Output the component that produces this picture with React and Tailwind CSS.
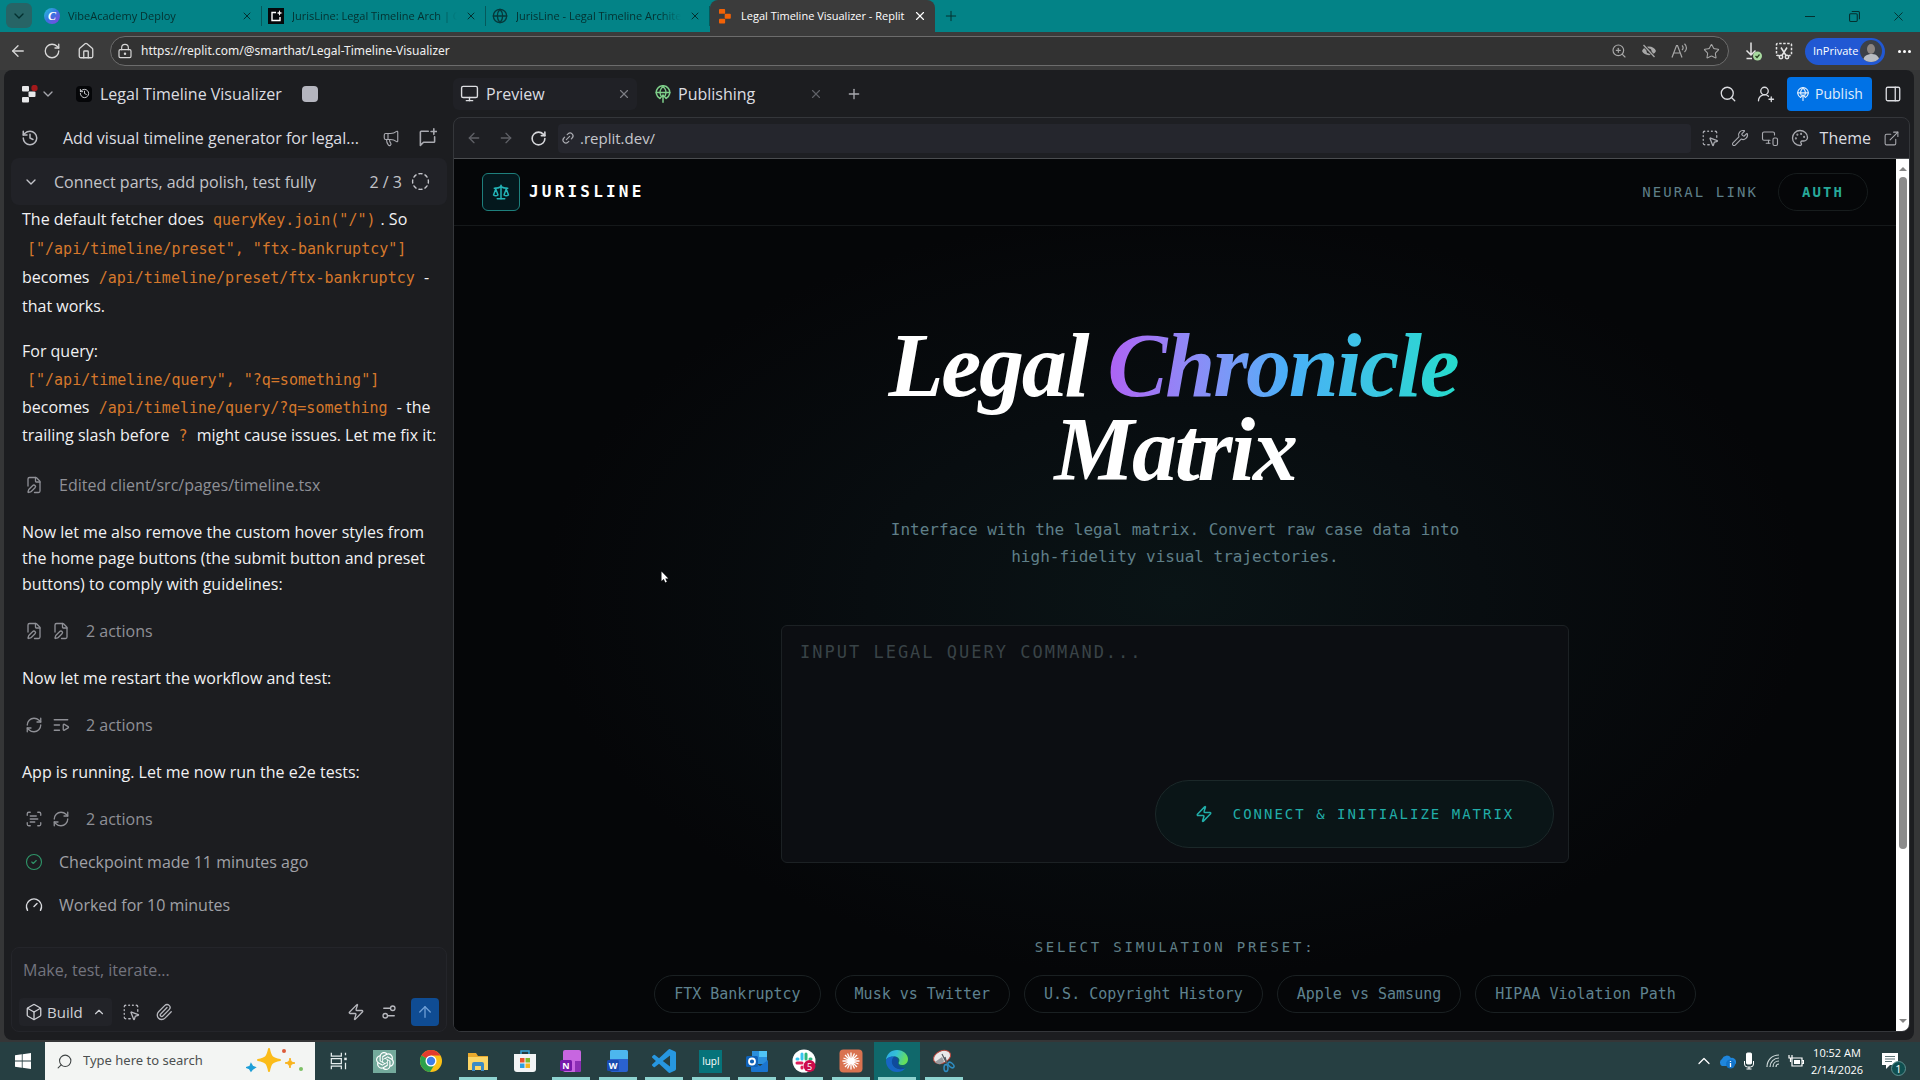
import {
  ArrowLeft, ArrowRight, ArrowUp, Box, ChevronDown, ChevronUp, CircleCheck, CircleDashed,
  ExternalLink, FilePen, Gauge, Globe, History, House, Link2, ListVideo, LockKeyhole, Megaphone,
  Monitor, MonitorSmartphone, Palette, PanelRight, Paperclip, Plus, RefreshCw, RotateCw, Scale,
  ScanText, Search, Settings2, SquareDashedMousePointer, Star, UserRoundPlus, Wrench, X, Zap, ZoomIn,
} from "lucide-react";
import { SiOpenai } from "react-icons/si";

const browserTabs = [
  { title: "VibeAcademy Deploy", icon: "canva" },
  { title: "JurisLine: Legal Timeline Arch | Go", icon: "studio" },
  { title: "JurisLine - Legal Timeline Architec", icon: "globe" },
];

const presets = [
  "FTX Bankruptcy",
  "Musk vs Twitter",
  "U.S. Copyright History",
  "Apple vs Samsung",
  "HIPAA Violation Path",
];

function ReplitMark({ className, dot }) {
  return (
    <svg viewBox="0 0 16 18" className={className} fill="currentColor" aria-hidden="true">
      <rect x="0" y="1" width="7" height="5.5" rx="1" />
      <rect x="6.5" y="6.5" width="7" height="5.5" rx="1" />
      <rect x="0" y="12" width="7" height="5.5" rx="1" />
      {dot && <circle cx="12.5" cy="3" r="3.2" fill="#a3191b" />}
    </svg>
  );
}

function PublishIcon({ className }) {
  return (
    <svg viewBox="0 0 24 24" className={className} fill="none" stroke="currentColor" strokeWidth="2" strokeLinecap="round" strokeLinejoin="round" aria-hidden="true">
      <path d="M8 18a9 9 0 1 1 8 0" />
      <path d="M9 14c-2-4-.5-9 3-12 3.500 3 5 8 3 12" />
      <path d="M3 10h18" />
      <path d="M12 23v-9M8.500 17l3.500-3.500 3.500 3.500" />
    </svg>
  );
}

function NewChatIcon({ className }) {
  return (
    <svg viewBox="0 0 24 24" className={className} fill="none" stroke="currentColor" strokeWidth="2" strokeLinecap="round" strokeLinejoin="round" aria-hidden="true">
      <path d="M13 4H4a1 1 0 0 0-1 1v17l4-4h13a1 1 0 0 0 1-1v-6" />
      <path d="M20 1v7M16.500 4.500h7" />
    </svg>
  );
}

function TabIcon({ icon }) {
  if (icon === "canva") {
    return (
      <span className="flex size-4 shrink-0 items-center justify-center rounded-full bg-gradient-to-br from-[#21c4d6] via-[#3a6fe0] to-[#7d3be0] font-['Liberation_Serif',serif] text-xs font-bold italic text-white">
        C
      </span>
    );
  }
  if (icon === "studio") {
    return (
      <svg viewBox="0 0 16 16" className="size-4 shrink-0" aria-hidden="true">
        <rect width="16" height="16" fill="#05080a" />
        <path d="M8 4.500H4v8h8V9" fill="none" stroke="#fff" strokeWidth="1.400" />
        <path d="M11.500 2l.8 2.200 2.200.8-2.200.8-.8 2.200-.8-2.200-2.200-.8 2.200-.8z" fill="#fff" />
      </svg>
    );
  }
  return <Globe className="size-4 shrink-0 text-[#06383a]" />;
}

function TabStrip() {
  return (
    <div className="flex h-8 items-stretch bg-[#038387] pl-[6px] text-[#04302f]">
      <button aria-label="Tab actions" className="mt-[3px] flex h-[25px] w-[26px] items-center justify-center rounded-md bg-[#276466]">
        <ChevronDown className="size-4" />
      </button>
      <div className="ml-[6px] flex text-[11px]">
        {browserTabs.map((tab) => (
          <div key={tab.title} className="flex h-8 w-56 items-center gap-2 pr-2 pl-[6px]">
            <TabIcon icon={tab.icon} />
            <span className="min-w-0 flex-1 whitespace-nowrap [mask-image:linear-gradient(to_right,black_88%,transparent)]">
              {tab.title}
            </span>
            <button aria-label={`Close ${tab.title}`}><X className="size-3" /></button>
            <span className="-mr-2 h-5 w-px bg-[#05595b]" />
          </div>
        ))}
        <div className="flex h-8 w-[225px] items-center gap-2 rounded-t-lg bg-[#3b3b3b] pr-2 pl-[9px] text-white">
          <ReplitMark className="h-4 w-[14px] shrink-0 text-[#f26207]" />
          <span className="flex-1 whitespace-nowrap">Legal Timeline Visualizer - Replit</span>
          <button aria-label="Close tab"><X className="size-[14px]" /></button>
        </div>
      </div>
      <button aria-label="New tab" className="ml-2"><Plus className="size-4" strokeWidth={1.5} /></button>
      <div className="ml-auto flex">
        <button aria-label="Minimize" className="flex w-11 items-center justify-center">
          <span className="h-px w-[10px] bg-[#04302f]" />
        </button>
        <button aria-label="Restore" className="flex w-11 items-center justify-center">
          <svg viewBox="0 0 10 10" className="size-[11px]" fill="none" stroke="currentColor" aria-hidden="true">
            <rect x=".5" y="2.500" width="7" height="7" rx="1" />
            <path d="M2.500.5h6a1 1 0 0 1 1 1v6" />
          </svg>
        </button>
        <button aria-label="Close window" className="flex w-11 items-center justify-center">
          <X className="size-[15px]" strokeWidth={1.5} />
        </button>
      </div>
    </div>
  );
}

function AddressBar() {
  return (
    <div className="flex h-[38px] items-center bg-[#3b3b3b] px-[9px] text-[#d8d8d8]">
      <div className="flex w-[101px] items-center gap-4">
        <button aria-label="Back"><ArrowLeft className="size-[18px]" strokeWidth={1.75} /></button>
        <button aria-label="Refresh"><RotateCw className="size-[18px]" strokeWidth={1.75} /></button>
        <button aria-label="Home"><House className="size-[18px]" strokeWidth={1.75} /></button>
      </div>
      <div className="flex h-[30px] flex-1 items-center rounded-full border border-[#6c6c6c] bg-[#323232] pr-2 pl-[6px]">
        <LockKeyhole className="size-4" strokeWidth={1.75} />
        <input
          aria-label="Address"
          defaultValue="https://replit.com/@smarthat/Legal-Timeline-Visualizer"
          className="ml-2 flex-1 bg-transparent font-['Noto_Sans',sans-serif] text-xs text-[#f0f0f0] outline-none"
        />
        <div className="flex items-center gap-[14px] text-[#a8a8a8]">
          <ZoomIn className="size-4" strokeWidth={1.75} />
          <svg viewBox="0 0 16 16" className="size-4" aria-hidden="true">
            <path d="M1 8c2-6 12-6 14 0-2 5.500-12 5.500-14 0z" fill="currentColor" />
            <circle cx="8" cy="8" r="2.500" fill="#323232" />
            <path d="M2 1.500l12 13" stroke="#323232" strokeWidth="3" />
            <path d="M2.500 2l11 12" stroke="currentColor" strokeWidth="1.300" />
          </svg>
          <svg viewBox="0 0 18 16" className="h-4 w-[18px]" fill="none" stroke="currentColor" strokeWidth="1.200" aria-hidden="true">
            <path d="M1 14.500L5.500 2.500h1L11 14.500M2.800 10h6.400M11 2.500c1.500 1.200 1.500 3 0 4.500M13.500.8c2.600 2.400 2.600 6 0 8.200" />
          </svg>
          <Star className="size-[17px]" strokeWidth={1.5} />
        </div>
      </div>
      <div className="flex items-center pl-[14px]">
        <button aria-label="Downloads">
          <svg viewBox="0 0 20 20" className="size-5" fill="none" stroke="#e4e4e4" strokeWidth="1.500" aria-hidden="true">
            <path d="M8 1.500v12M3.500 9.500L8 14l4.500-4.500M3.500 17.500H9" />
            <circle cx="14.500" cy="15" r="4.500" fill="#a8dba0" stroke="none" />
            <path d="M12.500 15l1.500 1.500 2.500-3" stroke="#24421f" strokeWidth="1.200" />
          </svg>
        </button>
        <button aria-label="Screenshot" className="ml-3">
          <svg viewBox="0 0 18 18" className="size-[18px]" fill="none" stroke="#e4e4e4" strokeWidth="1.500" aria-hidden="true">
            <path d="M4 13.500H2.500a1 1 0 0 1-1-1v-10a1 1 0 0 1 1-1h13a1 1 0 0 1 1 1v10a1 1 0 0 1-1 1H14" strokeDasharray="2.500 1.500" />
            <path d="M6 5.500l5 8M12 5.500l-5 8" />
            <circle cx="6" cy="15" r="1.700" />
            <circle cx="12" cy="15" r="1.700" />
          </svg>
        </button>
        <button className="ml-3 flex h-[27px] w-20 items-center justify-between rounded-full bg-[#2158d3] pr-[3px] pl-2 text-[11px] text-white">
          InPrivate
          <svg viewBox="0 0 22 22" className="size-[22px] rounded-full" aria-hidden="true">
            <rect width="22" height="22" fill="#3c4048" />
            <path d="M3 22c0-6 4-8 9-8s7 3 8 8z" fill="#b9bcc2" />
            <ellipse cx="11" cy="9" rx="4" ry="5" fill="#8c8582" />
          </svg>
        </button>
        <button aria-label="Settings and more" className="ml-[13px] flex gap-[2px]">
          <span className="size-[3px] rounded-full bg-white" />
          <span className="size-[3px] rounded-full bg-white" />
          <span className="size-[3px] rounded-full bg-white" />
        </button>
      </div>
    </div>
  );
}

function Code({ children }) {
  return (
    <code className="px-[5px] font-['DejaVu_Sans_Mono',monospace] text-[15px] leading-none text-[#d5782c]">
      {children}
    </code>
  );
}

function ActionRow({ icons, children }) {
  return (
    <div className="flex h-6 items-center text-[#8f9096]">
      <div className="flex gap-[9px] pl-[3px]">
        {icons.map((Icon, i) => (
          <Icon key={i} className="size-[18px]" strokeWidth={1.75} />
        ))}
      </div>
      <span className="ml-4">{children}</span>
    </div>
  );
}

function AgentPanel() {
  return (
    <section className="flex w-[449px] shrink-0 flex-col pr-[6px] pl-[7px] text-base">
      <div className="flex h-[47px] shrink-0 items-center pl-[11px] text-[#dcdde1]">
        <ReplitMark className="h-[18px] w-4 text-[#e8e8ea]" dot />
        <ChevronDown className="ml-[2px] size-4 text-[#a6a7ad]" />
        <span className="ml-5 flex size-4 items-center justify-center rounded bg-[#050608]">
          <History className="size-[11px]" />
        </span>
        <h2 className="ml-2">Legal Timeline Visualizer</h2>
        <span className="ml-5 size-4 rounded-sm bg-[#b5b6bf]" />
      </div>

      <div className="flex h-[41px] shrink-0 items-center px-[10px] text-[#dcdde1]">
        <button aria-label="History"><History className="size-[18px] text-[#b9bac0]" /></button>
        <h3 className="ml-6">Add visual timeline generator for legal...</h3>
        <button aria-label="Announcements" className="ml-auto"><Megaphone className="size-[18px] text-[#a9aab0]" strokeWidth={1.5} /></button>
        <button aria-label="New chat" className="ml-[18px]"><NewChatIcon className="size-[19px] text-[#a9aab0]" /></button>
      </div>

      <div className="flex h-[47px] shrink-0 items-center rounded-lg bg-[#212227] pr-[17px] pl-3 text-[#c3c4c9]">
        <ChevronDown className="size-4" />
        <span className="ml-[15px]">Connect parts, add polish, test fully</span>
        <span className="ml-auto">2 / 3</span>
        <CircleDashed className="ml-[9px] size-[19px]" strokeWidth={1.75} />
      </div>

      <div className="flex-1 overflow-hidden px-[11px] text-[#f1f1f3]">
        <p className="-mr-3 leading-[29px]">
          The default fetcher does <Code>queryKey.join("/")</Code>. So
          <br />
          <Code>["/api/timeline/preset", "ftx-bankruptcy"]</Code>
          <br />
          becomes <Code>/api/timeline/preset/ftx-bankruptcy</Code> -
          <br />
          that works.
        </p>
        <p className="-mr-3 mt-4 leading-7">
          For query:
          <br />
          <Code>["/api/timeline/query", "?q=something"]</Code>
          <br />
          becomes <Code>/api/timeline/query/?q=something</Code> - the
          <br />
          trailing slash before <Code>?</Code> might cause issues. Let me fix it:
        </p>
        <div className="mt-6 flex flex-col gap-[22px] leading-[26px]">
          <ActionRow icons={[FilePen]}>Edited client/src/pages/timeline.tsx</ActionRow>
          <p className="-mr-3">
            Now let me also remove the custom hover styles from
            <br />
            the home page buttons (the submit button and preset
            <br />
            buttons) to comply with guidelines:
          </p>
          <ActionRow icons={[FilePen, FilePen]}>2 actions</ActionRow>
          <p>Now let me restart the workflow and test:</p>
          <ActionRow icons={[RefreshCw, ListVideo]}>2 actions</ActionRow>
          <p>App is running. Let me now run the e2e tests:</p>
          <div className="flex flex-col gap-[19px]">
            <ActionRow icons={[ScanText, RefreshCw]}>2 actions</ActionRow>
            <div className="flex h-6 items-center gap-4 pl-[3px] text-[#a0a1a7]">
              <CircleCheck className="size-[18px] text-[#2f9468]" strokeWidth={1.5} />
              Checkpoint made 11 minutes ago
            </div>
            <div className="flex h-6 items-center gap-4 pl-[3px] text-[#a0a1a7]">
              <Gauge className="size-[18px] text-[#d9dade]" />
              Worked for 10 minutes
            </div>
          </div>
        </div>
      </div>

      <form className="mb-2 flex shrink-0 flex-col rounded-lg border border-[#24252a] bg-[#1d1e22] pt-2 pr-[7px] pb-[5px] pl-[7px]">
        <input
          aria-label="Message"
          placeholder="Make, test, iterate..."
          className="h-7 bg-transparent px-1 outline-none placeholder:text-[#73747e]"
        />
        <div className="mt-[14px] flex h-7 items-center text-[#b7b8be]">
          <button type="button" className="flex h-7 w-[93px] items-center rounded bg-[#222328] px-[6px] text-[#cfd0d5]">
            <Box className="size-[18px]" strokeWidth={1.75} />
            <span className="ml-1 text-[15px]">Build</span>
            <ChevronUp className="ml-auto size-[14px]" />
          </button>
          <button type="button" aria-label="Select element" className="ml-[10px]"><SquareDashedMousePointer className="size-[18px]" strokeWidth={1.75} /></button>
          <button type="button" aria-label="Attach" className="ml-[15px]"><Paperclip className="size-[18px]" strokeWidth={1.75} /></button>
          <button type="button" aria-label="Fast mode" className="ml-auto"><Zap className="size-[18px]" strokeWidth={1.75} /></button>
          <button type="button" aria-label="Options" className="ml-[15px]"><Settings2 className="size-[18px] -scale-y-100" strokeWidth={1.75} /></button>
          <button type="button" aria-label="Send" className="ml-[13px] flex size-7 items-center justify-center rounded bg-[#0f4c93] text-[#6f9fd6]">
            <ArrowUp className="size-[18px]" strokeWidth={1.75} />
          </button>
        </div>
      </form>
    </section>
  );
}

function WorkspaceTabs() {
  return (
    <div className="flex h-[47px] shrink-0 items-center text-base text-[#dcdde1]">
      <div className="flex h-8 w-[184px] items-center rounded-md bg-[#202126] pr-[6px] pl-[7px]">
        <Monitor className="size-[19px]" strokeWidth={1.75} />
        <span className="ml-[7px]">Preview</span>
        <button aria-label="Close Preview" className="ml-auto"><X className="size-[14px] text-[#7d7e84]" /></button>
      </div>
      <div className="flex h-8 w-[192px] items-center pr-[6px] pl-[17px]">
        <PublishIcon className="size-[18px] text-[#7fd08a]" />
        <span className="ml-[6px]">Publishing</span>
        <button aria-label="Close Publishing" className="ml-auto"><X className="size-[14px] text-[#5f6066]" /></button>
      </div>
      <button aria-label="New pane" className="ml-[17px]"><Plus className="size-4 text-[#a9aab0]" /></button>
      <div className="ml-auto flex items-center pr-3">
        <button aria-label="Search"><Search className="size-[18px]" strokeWidth={1.75} /></button>
        <button aria-label="Invite" className="ml-5"><UserRoundPlus className="size-[18px]" strokeWidth={1.75} /></button>
        <button className="ml-3 flex h-[34px] w-[85px] items-center justify-center gap-[5px] rounded bg-[#0072e6] text-sm text-[#e0edfb]">
          <PublishIcon className="size-[14px]" />
          Publish
        </button>
        <button aria-label="Toggle panel" className="ml-3"><PanelRight className="size-[18px]" strokeWidth={1.75} /></button>
      </div>
    </div>
  );
}

function PreviewToolbar() {
  return (
    <div className="flex h-[41px] shrink-0 items-center border-b border-[#4b4d50] pr-[9px] pl-3 text-[#a9aab0]">
      <button aria-label="Back"><ArrowLeft className="size-4 text-[#5f6066]" /></button>
      <button aria-label="Forward" className="ml-4"><ArrowRight className="size-4 text-[#5f6066]" /></button>
      <button aria-label="Reload" className="ml-4"><RotateCw className="size-[17px] text-[#d5d6da]" strokeWidth={2.25} /></button>
      <div className="ml-[11px] flex h-[29px] flex-1 items-center rounded bg-[#25262d] pl-[3px]">
        <Link2 className="size-[14px] -rotate-45" />
        <input aria-label="Preview path" defaultValue=".replit.dev/" className="ml-[5px] flex-1 bg-transparent text-[15px] text-[#c5c6cc] outline-none" />
      </div>
      <div className="flex items-center gap-3 pl-[10px]">
        <SquareDashedMousePointer className="size-[18px]" strokeWidth={1.75} />
        <Wrench className="size-[18px]" strokeWidth={1.5} />
        <MonitorSmartphone className="size-[18px]" strokeWidth={1.5} />
        <Palette className="size-[18px]" strokeWidth={1.75} />
      </div>
      <button className="ml-[11px] text-base text-[#dcdde1]">Theme</button>
      <button aria-label="Open in new tab" className="ml-3"><ExternalLink className="size-[17px]" strokeWidth={1.5} /></button>
    </div>
  );
}

function PreviewPage() {
  return (
    <div className="flex min-w-0 flex-1 flex-col bg-[#050608] bg-[radial-gradient(ellipse_at_center,#0a1416_0%,#080d10_30%,#050608_62%)] font-['DejaVu_Sans_Mono',monospace] text-[#5f7f88]">
      <header className="flex h-[67px] shrink-0 items-center justify-between border-b border-[#15181a] bg-[#050608] px-7">
        <div className="flex items-center gap-[9px]">
          <span className="flex size-[38px] items-center justify-center rounded-md border border-[#1e7f7c] bg-[#04181d] text-[#23b3b6]">
            <Scale className="size-[18px]" />
          </span>
          <span className="text-base font-bold tracking-[0.2em] text-white">JURISLINE</span>
        </div>
        <div className="flex items-center gap-5 text-sm">
          <a href="#neural" className="tracking-[0.15em]">NEURAL LINK</a>
          <button className="h-[38px] w-[90px] rounded-full border border-[#171c1d] font-bold tracking-[0.15em] text-[#27a99a]">
            AUTH
          </button>
        </div>
      </header>

      <main className="flex flex-1 flex-col items-center pt-[98px]">
        <h1 className="text-center font-['Liberation_Serif',serif] text-[90px] leading-[84px] font-bold tracking-tight text-white italic">
          Legal{" "}
          <span className="bg-gradient-to-r from-[#ad62f4] via-[#4aaef8] to-[#24dccb] bg-clip-text pr-1 text-transparent">
            Chronicle
          </span>
          <br />
          Matrix
        </h1>
        <p className="mt-6 text-center text-base leading-[27px]">
          Interface with the legal matrix. Convert raw case data into
          <br />
          high-fidelity visual trajectories.
        </p>
        <form className="mt-[55px] flex h-[238px] w-[788px] flex-col rounded-md border border-[#1c2124] bg-[#0c0e12] p-[14px]">
          <textarea
            aria-label="Legal query"
            placeholder="INPUT LEGAL QUERY COMMAND..."
            className="flex-1 resize-none bg-transparent px-1 text-[17px] leading-6 tracking-[2px] outline-none placeholder:text-[#394347]"
          />
          <button type="button" className="flex h-[68px] w-[399px] items-center justify-center gap-5 self-end rounded-full border border-[#1b2829] bg-[#0a1517] text-sm tracking-[2px] text-[#21ada8]">
            <Zap className="size-[18px]" />
            CONNECT &amp; INITIALIZE MATRIX
          </button>
        </form>
        <h2 className="mt-[74px] text-sm tracking-[0.2em]">SELECT SIMULATION PRESET:</h2>
        <div className="mt-[18px] flex justify-center gap-[14px]">
          {presets.map((name) => (
            <button key={name} className="h-[38px] rounded-full border border-[#1a2022] px-[19px] text-[15px] whitespace-nowrap text-[#5f828f]">
              {name}
            </button>
          ))}
        </div>
      </main>
    </div>
  );
}

function Scrollbar() {
  return (
    <div className="flex w-[13px] shrink-0 flex-col items-center bg-white py-2">
      <span className="border-x-4 border-b-4 border-x-transparent border-b-[#858585]" />
      <span className="mt-[6px] h-[672px] w-[8px] rounded-full bg-[#8b8b8b]" />
      <span className="mt-auto border-x-4 border-t-4 border-x-transparent border-t-[#858585]" />
    </div>
  );
}

function Sparkle() {
  return (
    <svg viewBox="0 0 60 28" className="h-7 w-[60px]" aria-hidden="true">
      <path d="M23 2c1.500 8 3 9.500 11 11-8 1.500-9.500 3-11 11-1.500-8-3-9.500-11-11 8-1.500 9.500-3 11-11z" fill="#fbbc1a" stroke="#fbbc1a" strokeWidth="2" strokeLinejoin="round" />
      <path d="M44 11c.8 3.500 1.500 4.500 5 5-3.500.8-4.500 1.500-5 5-.8-3.500-1.500-4.500-5-5 3.500-.8 4.500-1.500 5-5z" fill="#f9b31c" stroke="#f9b31c" />
      <path d="M5 17l1.500 2.500 2.500 1-2.500 1.500L5 24l-1.500-2.500L1 20.500l3-1z" fill="#1e9fd8" stroke="#1e9fd8" strokeWidth="1.500" />
      <circle cx="38" cy="4" r="2" fill="#dd5b3a" />
      <circle cx="55" cy="22" r="2" fill="#7dc065" />
    </svg>
  );
}

const icon = "size-6";

const apps = [
  {
    name: "Task View",
    art: (
      <svg viewBox="0 0 24 24" className="size-5" fill="none" stroke="#e6eeee" strokeWidth="1.500">
        <path d="M4 2v4h12V2M4 22v-4h12v4M4 9h12v6H4zM21 2v3M21 14v8" />
        <path d="M21 8v3" strokeWidth="3" />
      </svg>
    ),
  },
  {
    name: "ChatGPT",
    art: <span className="flex size-[23px] items-center justify-center bg-[#74aa9c] text-white"><SiOpenai className="size-[18px]" /></span>,
  },
  {
    name: "Chrome",
    art: (
      <svg viewBox="0 0 24 24" className={icon}>
        <circle cx="12" cy="12" r="11" fill="#fbc116" />
        <path d="M12 12L2.500 6.500A11 11 0 0 1 21.500 6.500H12z" fill="#e33b2e" />
        <path d="M12 12L2.500 6.500A11 11 0 0 0 11 23l5.500-9z" fill="#2da14c" />
        <circle cx="12" cy="12" r="5.500" fill="#fff" />
        <circle cx="12" cy="12" r="4.200" fill="#3f7ee8" />
      </svg>
    ),
  },
  {
    name: "File Explorer",
    open: true,
    art: (
      <svg viewBox="0 0 24 24" className={icon}>
        <path d="M2 4h8l2 3h10v14H2z" fill="#e9a92d" />
        <path d="M2 8h20v13H2z" fill="#fbd566" />
        <path d="M6 22v-7a2 2 0 0 1 2-2h8a2 2 0 0 1 2 2v7h-3v-5H9v5z" fill="#3b8ac4" />
      </svg>
    ),
  },
  {
    name: "Microsoft Store",
    art: (
      <svg viewBox="0 0 24 24" className={icon}>
        <path d="M8 6V2h8v4" fill="none" stroke="#35a5d8" strokeWidth="1.500" />
        <path d="M1 5h22v15a3 3 0 0 1-3 3H4a3 3 0 0 1-3-3z" fill="#f2f4f5" />
        <path d="M7 9h4.500v4.500H7z" fill="#e8512b" />
        <path d="M12.500 9H17v4.500h-4.500z" fill="#80b92a" />
        <path d="M7 14.500h4.500V19H7z" fill="#2b9fe0" />
        <path d="M12.500 14.500H17V19h-4.500z" fill="#f4b51e" />
      </svg>
    ),
  },
  {
    name: "OneNote",
    open: true,
    art: (
      <svg viewBox="0 0 24 24" className={icon}>
        <rect x="4" y="1" width="18" height="22" rx="2" fill="#c766e0" />
        <path d="M16 12h6v9a2 2 0 0 1-2 2h-4z" fill="#8b2fb5" />
        <rect x="1" y="11" width="12" height="11" rx="1.500" fill="#7719aa" />
        <text x="7" y="20" textAnchor="middle" fontSize="9" fontWeight="700" fill="#fff">N</text>
      </svg>
    ),
  },
  {
    name: "Word",
    open: true,
    art: (
      <svg viewBox="0 0 24 24" className={icon}>
        <rect x="4" y="1" width="18" height="22" rx="2" fill="#2a62d0" />
        <path d="M4 3a2 2 0 0 1 2-2h14a2 2 0 0 1 2 2v7H4z" fill="#4db6ee" />
        <rect x="1" y="11" width="12" height="11" rx="1.500" fill="#1a4bb0" />
        <text x="7" y="20" textAnchor="middle" fontSize="9" fontWeight="700" fill="#fff">W</text>
      </svg>
    ),
  },
  {
    name: "Visual Studio Code",
    open: true,
    art: (
      <svg viewBox="0 0 24 24" className={icon}>
        <path fill="#2797e0" d="M23.150 2.587L18.210.21a1.494 1.494 0 0 0-1.705.29l-9.460 8.630-4.120-3.128a.999.999 0 0 0-1.276.057L.327 7.261A1 1 0 0 0 .326 8.740L3.899 12 .326 15.260a1 1 0 0 0 .001 1.479L1.650 17.940a.999.999 0 0 0 1.276.057l4.120-3.128 9.460 8.630a1.492 1.492 0 0 0 1.704.29l4.942-2.377A1.500 1.500 0 0 0 24 20.060V3.939a1.500 1.500 0 0 0-.85-1.352zm-5.146 14.861L10.826 12l7.178-5.448v10.896z" />
      </svg>
    ),
  },
  {
    name: "Lupl",
    open: true,
    art: <span className="flex size-[23px] items-center justify-center bg-[#06737a] text-[10px] leading-none text-white">lupl</span>,
  },
  {
    name: "Outlook",
    open: true,
    art: (
      <svg viewBox="0 0 24 24" className={icon}>
        <path d="M7 2h15v13H7z" fill="#2b8fdc" />
        <path d="M14 2h8v6h-8z" fill="#50c4f5" />
        <path d="M6 11l9 6 8-6v11a1 1 0 0 1-1 1H7a1 1 0 0 1-1-1z" fill="#1b75cf" />
        <rect x="1" y="7" width="12" height="11" rx="1.500" fill="#0f62b8" />
        <circle cx="7" cy="12.500" r="3" fill="none" stroke="#fff" strokeWidth="1.800" />
      </svg>
    ),
  },
  {
    name: "Slack",
    open: true,
    art: (
      <svg viewBox="0 0 24 24" className={icon}>
        <circle cx="12" cy="12" r="11.500" fill="#fff" />
        <g strokeWidth="3" strokeLinecap="round">
          <path d="M10 5v5M5 10h1" stroke="#36c5f0" />
          <path d="M14 5v5M18 10h1" stroke="#2eb67d" />
          <path d="M5 14h5M10 18v1" stroke="#e01e5a" />
        </g>
        <circle cx="17.500" cy="17" r="6" fill="#cc0b4c" />
        <text x="17.500" y="20.500" textAnchor="middle" fontSize="9" fill="#fff">5</text>
      </svg>
    ),
  },
  {
    name: "Claude",
    open: true,
    art: (
      <svg viewBox="0 0 24 24" className={icon}>
        <rect x=".5" y=".5" width="23" height="23" rx="4" fill="#d97350" />
        <path d="M12 3.500v17M3.500 12h17M6 6l12 12M18 6L6 18M8.500 4.500l7 15M15.500 4.500l-7 15M4.500 9l15 6M4.500 15l15-6" stroke="#fff" strokeWidth="1.300" />
      </svg>
    ),
  },
  {
    name: "Microsoft Edge",
    open: true,
    active: true,
    art: (
      <svg viewBox="0 0 24 24" className={icon}>
        <defs>
          <linearGradient id="edgeTop" x1="0" x2="1" y1="0" y2=".3">
            <stop offset="0" stopColor="#2aa5e8" />
            <stop offset=".5" stopColor="#35c1d6" />
            <stop offset="1" stopColor="#66e05a" />
          </linearGradient>
        </defs>
        <path d="M1 11C1.500 5 6 1 12 1c6.500 0 11 4.500 11 9 0 4-3 6-6 6-3 0-4-1.500-3-3 1.500-3-1-5.500-4.500-5.500C5 7.500 2 9 1 11z" fill="url(#edgeTop)" />
        <path d="M1 12c0-3 4-5 8.500-4.500C6 10 6.500 17 12 19.500c3.500 1.500 7 .5 9-1-2 3-5.500 4.500-9 4.500C5.500 23 1 18 1 12z" fill="#1765c4" />
        <path d="M9.500 7.500C6 10 6 15 9.500 18c3 2.500 8 3 11.500.5-4 1-8.500-1-8-5.500.5-3-1-5-3.500-5.500z" fill="#0f4a9c" />
      </svg>
    ),
  },
  {
    name: "Snipping Tool",
    open: true,
    art: (
      <svg viewBox="0 0 24 24" className={icon}>
        <ellipse cx="10" cy="8" rx="9" ry="6" transform="rotate(-25 10 8)" fill="#e9e9ea" stroke="#b5473e" />
        <path d="M3 13c3 3 7 3 9-1l-2-4z" fill="#9a9ca0" />
        <path d="M10 5l5 10M13 8l2 7" stroke="#555b60" strokeWidth="1.200" />
        <ellipse cx="14" cy="19" rx="2" ry="3.500" fill="none" stroke="#2e8cc0" strokeWidth="1.500" />
        <ellipse cx="19" cy="16" rx="3.500" ry="2" transform="rotate(40 19 16)" fill="none" stroke="#2e8cc0" strokeWidth="1.500" />
      </svg>
    ),
  },
];

function Taskbar() {
  return (
    <footer className="flex h-[38px] shrink-0 items-stretch bg-[#263f42] text-white">
      <button aria-label="Start" className="flex w-[45px] items-center justify-center">
        <svg viewBox="0 0 16 16" className="size-4" fill="#fff" aria-hidden="true">
          <path d="M0 2.300L6.800 1.300v6.300H0zM7.600 1.200L16 0v7.600H7.600zM0 8.400h6.800v6.300L0 13.700zM7.600 8.400H16V16l-8.400-1.200z" />
        </svg>
      </button>
      <label className="flex w-[270px] items-center bg-[#f3f5f3] pr-[9px] pl-[11px] text-[#3f4444]">
        <Search className="size-[17px] -scale-x-100" strokeWidth={1.5} />
        <input aria-label="Search" placeholder="Type here to search" className="ml-[10px] w-[140px] bg-transparent font-['Noto_Sans',sans-serif] text-[13px] outline-none placeholder:text-[#4c5050]" />
        <span className="ml-auto"><Sparkle /></span>
      </label>
      <div className="grid w-[652px] grid-cols-14">
        {apps.map((app) => (
          <button
            key={app.name}
            aria-label={app.name}
            className={`flex flex-col items-center ${app.active ? "bg-[#10686b]" : ""}`}
          >
            <span className="flex flex-1 items-center">{app.art}</span>
            <span className={`-mt-[3px] h-[3px] w-[38px] ${app.open ? "bg-[#8ed3d0]" : ""}`} />
          </button>
        ))}
      </div>
      <div className="ml-auto flex items-center pr-[14px]">
        <ChevronUp className="size-5" strokeWidth={1.5} />
        <svg viewBox="0 0 18 16" className="ml-1 h-4 w-[18px]" aria-hidden="true">
          <path d="M4 13a4 4 0 0 1 0-7 5 5 0 0 1 9-1 4 4 0 0 1 2 8z" fill="#1f86dc" />
          <circle cx="12.500" cy="11" r="4.500" fill="#1273c8" />
          <path d="M12.500 10v4M12.500 8v1" stroke="#fff" strokeWidth="1.300" />
        </svg>
        <svg viewBox="0 0 10 18" className="ml-2 h-[18px] w-[10px]" fill="none" stroke="#fff" aria-hidden="true">
          <rect x="2.500" y="1" width="5" height="11" rx="1" fill="#fff" />
          <path d="M.5 9v3a3 3 0 0 0 3 3h3a3 3 0 0 0 3-3V9M5 15v2M2.500 17h5" />
        </svg>
        <svg viewBox="0 0 14 14" className="ml-3 size-[14px]" fill="none" stroke="#cfdada" strokeWidth="1.200" aria-hidden="true">
          <path d="M1 13C1 6 6 1 13 1M4 13c0-5 4-9 9-9M7 13c0-3.500 2.500-6 6-6M10 13c0-2 1-3 3-3" />
        </svg>
        <svg viewBox="0 0 16 14" className="ml-2 h-[14px] w-4" fill="none" stroke="#fff" strokeWidth="1.200" aria-hidden="true">
          <path d="M4 4h10v8H4zM14.500 6.500h1v3h-1M1 1v3h3V1M2.500 4v4" />
          <path d="M6 6h6v4H6z" fill="#fff" stroke="none" />
        </svg>
        <div className="ml-1 w-[58px] text-center text-[11px] leading-[17px] whitespace-nowrap">
          10:52 AM
          <br />
          2/14/2026
        </div>
        <div className="relative ml-4 flex h-[38px] w-6 items-center">
          <svg viewBox="0 0 16 16" className="size-4" aria-hidden="true">
            <path d="M0 0h16v12H8l-4 4v-4H0z" fill="#fff" />
            <path d="M3 3.500h10M3 6h10M3 8.500h7" stroke="#5b7376" />
          </svg>
          <span className="absolute right-0 bottom-1 flex size-[15px] items-center justify-center rounded-full border border-[#5f8f8f] bg-[#0f4f50] text-[11px] leading-none">
            1
          </span>
        </div>
      </div>
    </footer>
  );
}

export default function App() {
  return (
    <div className="relative flex h-screen flex-col overflow-hidden bg-[#353637] font-['Open_Sans',sans-serif]">
      <TabStrip />
      <AddressBar />
      <div className="mr-[6px] mb-[2px] ml-1 flex min-h-0 flex-1 rounded-lg bg-[#1c1d20]">
        <AgentPanel />
        <div className="flex min-w-0 flex-1 flex-col pb-2">
          <WorkspaceTabs />
          <div className="mr-1 flex min-h-0 flex-1 flex-col overflow-hidden rounded-lg border border-[#34363a] bg-[#1e1f23]">
            <PreviewToolbar />
            <div className="flex min-h-0 flex-1">
              <PreviewPage />
              <Scrollbar />
            </div>
          </div>
        </div>
      </div>
      <Taskbar />
      <svg viewBox="0 0 8 12" className="absolute top-[571px] left-[661px] h-3 w-2" aria-hidden="true">
        <path d="M.5.5v9.500l2.300-2 1.500 3.500 1.500-.7-1.500-3.300h3z" fill="#fff" />
      </svg>
    </div>
  );
}
